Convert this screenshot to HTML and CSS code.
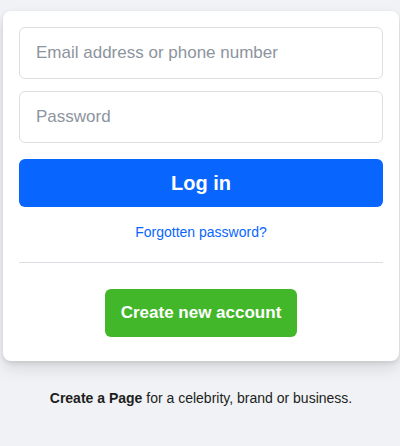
FILE: index.html
```html
<!DOCTYPE html>
<html lang="en">
<head>
    <meta charset="UTF-8">
    <meta name="viewport" content="width=device-width, initial-scale=1.0">
    <title>Log in</title>
    <link rel="stylesheet" href="styles.css">
</head>
<body>
    <div class="card">
        <form class="login-form" action="/login" method="POST">
            <input class="field" type="text" name="email" placeholder="Email address or phone number">
            <input class="field" type="password" name="pass" placeholder="Password">
            <button class="btn-login" type="submit">Log in</button>
        </form>
        <a class="forgot" href="#">Forgotten password?</a>
        <div class="divider"></div>
        <div class="create-wrap">
            <a class="btn-create" href="#">Create new account</a>
        </div>
    </div>
    <p class="page-note"><a href="#">Create a Page</a> for a celebrity, brand or business.</p>
</body>
</html>
```

FILE: styles.css
```css
body {
    background-color: #f0f2f5;
    color: #1c1e21;
    font-family: "Liberation Sans", Arial, sans-serif;
    margin: 0;
    padding: 11px 1px 0 3px;
}

.card {
    background-color: #ffffff;
    border-radius: 8px;
    box-shadow: 0 2px 4px rgba(0, 0, 0, 0.1), 0 8px 16px rgba(0, 0, 0, 0.1);
    padding: 16px 16px 24px;
    text-align: center;
}

.login-form {
    display: flex;
    flex-direction: column;
    gap: 12px;
}

.field {
    box-sizing: border-box;
    height: 52px;
    padding: 14px 16px;
    border: 1px solid #dddfe2;
    border-radius: 6px;
    font-family: inherit;
    font-size: 17px;
    color: #1d2129;
    outline: none;
}

.field::placeholder {
    color: #8d949e;
}

.btn-login {
    margin-top: 4px;
    height: 48px;
    border: none;
    border-radius: 6px;
    background-color: #0866ff;
    color: #ffffff;
    font-family: inherit;
    font-size: 20px;
    font-weight: bold;
    cursor: pointer;
}

.forgot {
    display: block;
    margin-top: 16px;
    font-size: 14px;
    line-height: 19px;
    color: #0866ff;
    text-decoration: none;
}

.divider {
    border-bottom: 1px solid #dadde1;
    margin: 20px 0;
}

.create-wrap {
    padding-top: 6px;
}

.btn-create {
    display: inline-block;
    padding: 0 16px;
    height: 48px;
    line-height: 48px;
    border-radius: 6px;
    background-color: #42b72a;
    color: #ffffff;
    font-size: 17px;
    font-weight: bold;
    text-decoration: none;
}

.page-note {
    margin: 28px 0 0;
    text-align: center;
    font-size: 14px;
    line-height: 19px;
}

.page-note a {
    color: #1c1e21;
    font-weight: bold;
    text-decoration: none;
}
```
